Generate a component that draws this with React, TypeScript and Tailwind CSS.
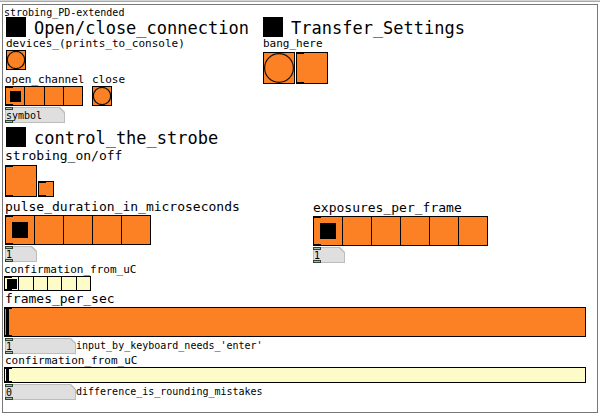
import { useState } from "react";

const mono = "font-['DejaVu_Sans_Mono','Liberation_Mono',monospace]";
const small = "text-[11px] leading-[13px] whitespace-nowrap";
const medium = "text-[13px] leading-4 whitespace-nowrap";

/** Short inlet and outlet marks on the left edge of a widget. */
function Ports({ hollow = false }: { hollow?: boolean }) {
  const mark = hollow
    ? "h-[3px] border border-[#2f4532] bg-[#a9bba9]"
    : "h-[2px] bg-black";
  return (
    <span className="pointer-events-none absolute inset-y-0 left-0 flex w-[8px] flex-col justify-between">
      <span className={mark} />
      <span className={mark} />
    </span>
  );
}

function Heading({ children }: { children: string }) {
  return (
    <h2 className="flex h-5 items-start gap-2 pl-px text-[17px] leading-[22px] whitespace-nowrap">
      <span className="size-5 shrink-0 bg-black" />
      {children}
    </h2>
  );
}

function Bang({ id, size }: { id: string; size: string }) {
  return (
    <button
      id={id}
      type="button"
      className={`relative block shrink-0 border border-black bg-[#fc8124] ${size}`}
    >
      <svg viewBox="0 0 30 30" className="block size-full">
        <circle
          cx="15"
          cy="15"
          r="14.4"
          fill="none"
          stroke="#111"
          strokeWidth="1.2"
          vectorEffect="non-scaling-stroke"
        />
      </svg>
    </button>
  );
}

function Toggle({ id, label, size }: { id: string; label?: string; size: string }) {
  return (
    <span className={`relative block shrink-0 ${size}`}>
      <input
        id={id}
        type="checkbox"
        aria-label={label}
        className="block size-full appearance-none border border-black bg-[#fc8124] checked:bg-[#c85f10]"
      />
      <Ports />
    </span>
  );
}

function RadioRow({
  name,
  labelledBy,
  count,
  box,
  knob,
  fill = "bg-[#fc8124]",
}: {
  name: string;
  labelledBy: string;
  count: number;
  box: string;
  knob: string;
  fill?: string;
}) {
  const [value, setValue] = useState(0);
  return (
    <div className={`relative ${box}`}>
      <div
        role="radiogroup"
        aria-labelledby={labelledBy}
        className={`grid size-full auto-cols-fr grid-flow-col border-y border-r border-black ${fill}`}
      >
        {Array.from({ length: count }, (_, i) => (
          <label key={i} className="flex items-center justify-center border-l border-black">
            <input
              type="radio"
              name={name}
              aria-label={String(i)}
              checked={value === i}
              onChange={() => setValue(i)}
              className={`appearance-none checked:bg-black ${knob}`}
            />
          </label>
        ))}
      </div>
      <Ports />
    </div>
  );
}

function Atom({ id, label, value, width }: { id: string; label: string; value: string; width: string }) {
  return (
    <span className={`relative block h-4 shrink-0 ${width}`}>
      <span className="block size-full bg-[#bcbcbc] p-px [clip-path:polygon(0_0,calc(100%-5px)_0,100%_5px,100%_100%,0_100%)]">
        <input
          id={id}
          aria-label={label}
          defaultValue={value}
          className="block size-full bg-[#dfdfdf] text-[10px] leading-[14px] outline-none [clip-path:polygon(0_0,calc(100%-5px)_0,100%_5px,100%_100%,0_100%)]"
        />
      </span>
      <Ports hollow />
    </span>
  );
}

function Slider({ id, look }: { id: string; look: string }) {
  return (
    <span className="relative mr-[11px] block">
      <input
        id={id}
        type="range"
        min={0}
        max={100}
        defaultValue={0}
        className={`block w-full appearance-none border border-black pl-px [&::-webkit-slider-thumb]:w-[3px] [&::-webkit-slider-thumb]:appearance-none [&::-webkit-slider-thumb]:bg-black ${look}`}
      />
      <Ports />
    </span>
  );
}

export default function App() {
  return (
    <div className={`min-h-screen bg-white text-black ${mono}`}>
      <div className="h-[2px] border-b border-[#a8a8a8] bg-[#d4d4d4]" />
      <main className="mx-[2px] mt-[2px] border border-[#777] pb-3 pl-px">
        <h1 className="h-3 text-[10px] leading-4">strobing_PD-extended</h1>

        <div className="flex pl-px">
          <section className="w-[257px] shrink-0">
            <Heading>Open/close_connection</Heading>
            <label htmlFor="devices" className={`block pl-px ${small}`}>
              devices_(prints_to_console)
            </label>
            <div className="pl-px">
              <Bang id="devices" size="size-5" />
            </div>
            <div className="flex gap-[9px]">
              <div className="w-[78px]">
                <div id="channel-label" className={`pt-[3px] ${small}`}>
                  open_channel
                </div>
                <RadioRow
                  name="channel"
                  labelledBy="channel-label"
                  count={4}
                  box="h-5 w-full"
                  knob="size-[11px]"
                />
              </div>
              <div>
                <label htmlFor="close" className={`block pt-[3px] ${small}`}>
                  close
                </label>
                <Bang id="close" size="size-5" />
              </div>
            </div>
            <div className="pt-px">
              <Atom id="symbol" label="channel symbol" value="symbol" width="w-[60px]" />
            </div>
          </section>

          <section>
            <Heading>Transfer_Settings</Heading>
            <label htmlFor="bang" className={`block pb-[2px] pl-px ${small}`}>
              bang_here
            </label>
            <div className="flex gap-px pl-px">
              <Bang id="bang" size="size-8" />
              <Toggle id="transfer" label="transfer" size="size-8" />
            </div>
          </section>
        </div>

        <section className="pt-1 pl-px">
          <Heading>control_the_strobe</Heading>
          <label htmlFor="strobing" className={`block pt-px pb-px ${medium}`}>
            strobing_on/off
          </label>
          <div className="flex items-end gap-px">
            <Toggle id="strobing" size="size-8" />
            <Toggle id="strobing-state" label="strobing state" size="size-4" />
          </div>

          <div className="flex">
            <div className="w-[308px] shrink-0">
              <div id="pulse-label" className={`pt-[2px] ${medium}`}>
                pulse_duration_in_microseconds
              </div>
              <RadioRow
                name="pulse"
                labelledBy="pulse-label"
                count={5}
                box="h-[30px] w-[146px]"
                knob="size-4"
              />
              <div className="pt-px">
                <Atom id="pulse-value" label="pulse duration" value="1" width="w-8" />
              </div>
            </div>
            <div>
              <div id="exposures-label" className={`pt-[3px] ${medium}`}>
                exposures_per_frame
              </div>
              <RadioRow
                name="exposures"
                labelledBy="exposures-label"
                count={6}
                box="h-[30px] w-[175px]"
                knob="size-4"
              />
              <div className="pt-px">
                <Atom id="exposures-value" label="exposures" value="1" width="w-8" />
              </div>
            </div>
          </div>
        </section>

        <section>
          <div id="confirm-label" className={small}>
            confirmation_from_uC
          </div>
          <RadioRow
            name="confirm"
            labelledBy="confirm-label"
            count={6}
            box="h-[15px] w-[87px]"
            knob="size-[10px]"
            fill="bg-[#fdfbc8]"
          />
          <label htmlFor="frames" className={`block pl-px ${medium}`}>
            frames_per_sec
          </label>
          <Slider
            id="frames"
            look="h-[30px] bg-[#fc8124] [&::-webkit-slider-thumb]:h-[28px]"
          />
          <div className="flex items-center pt-px pl-px">
            <Atom id="frames-value" label="frames per second" value="1" width="w-[71px]" />
            <label htmlFor="frames-value" className="text-[10px] leading-4 whitespace-nowrap">
              input_by_keyboard_needs_'enter'
            </label>
          </div>
          <label htmlFor="frames-confirm" className={`block pl-px ${small}`}>
            confirmation_from_uC
          </label>
          <Slider
            id="frames-confirm"
            look="h-4 bg-[#fdfbc8] [&::-webkit-slider-thumb]:h-[14px]"
          />
          <div className="flex items-center pt-px pl-px">
            <Atom id="difference" label="difference" value="0" width="w-[71px]" />
            <label htmlFor="difference" className="text-[10px] leading-4 whitespace-nowrap">
              difference_is_rounding_mistakes
            </label>
          </div>
        </section>
      </main>
    </div>
  );
}
